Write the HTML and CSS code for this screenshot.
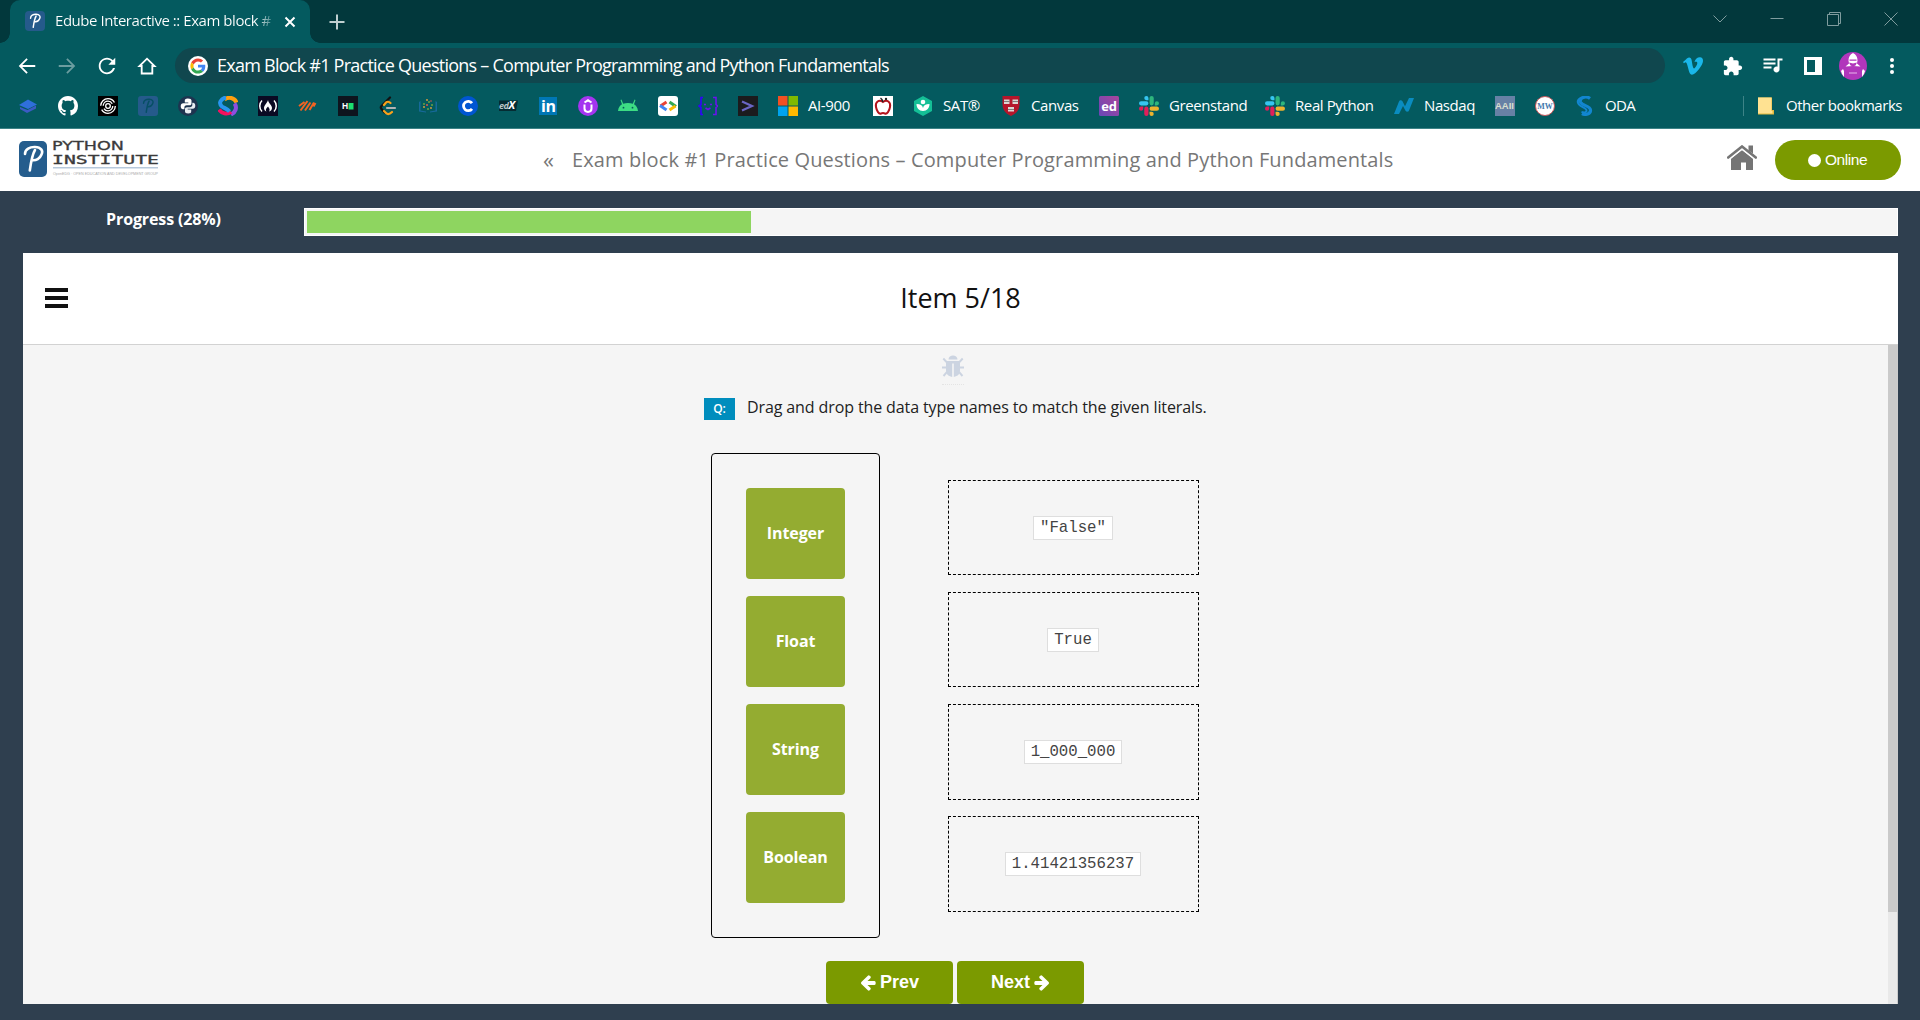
FILE: index.html
```html
<!DOCTYPE html>
<html lang="en">
<head>
<meta charset="utf-8">
<title>Edube Interactive :: Exam block #1</title>
<link rel="stylesheet" href="styles.css">
</head>
<body>
<svg class="defs" width="0" height="0" aria-hidden="true">
  <symbol id="p-mark" viewBox="0 0 28 36">
    <path d="M6 13C6 8 11 5.800 16 6C22 6.300 24.500 9.500 22.500 13.500C21 17.500 17 19.700 13.500 19.200M16 9C13.500 13 12 21 10.800 29.500" fill="none" stroke="currentColor" stroke-width="2.600" stroke-linecap="round"/>
  </symbol>
  <symbol id="slack-arm" viewBox="0 0 24 24">
    <path fill="currentColor" d="M5.042 15.165a2.528 2.528 0 0 1-2.520 2.523A2.528 2.528 0 0 1 0 15.165a2.527 2.527 0 0 1 2.522-2.520h2.520zM6.313 15.165a2.527 2.527 0 0 1 2.521-2.520 2.527 2.527 0 0 1 2.521 2.520v6.313A2.528 2.528 0 0 1 8.834 24a2.528 2.528 0 0 1-2.521-2.522z"/>
  </symbol>
  <symbol id="slack" viewBox="0 0 24 24">
    <use href="#slack-arm" width="24" height="24" color="#e01e5a"/>
    <use href="#slack-arm" width="24" height="24" color="#36c5f0" transform="rotate(90 12 12)"/>
    <use href="#slack-arm" width="24" height="24" color="#2eb67d" transform="rotate(180 12 12)"/>
    <use href="#slack-arm" width="24" height="24" color="#ecb22e" transform="rotate(270 12 12)"/>
  </symbol>
</svg>

<div class="browser">
  <div class="tabstrip">
    <div class="tab">
      <svg class="favicon" viewBox="0 0 20 20"><rect width="20" height="20" rx="4" fill="#255a8b"/><use href="#p-mark" x="1" y="0" width="18" height="20" color="#fff"/></svg>
      <span class="tab-title">Edube Interactive :: Exam block #</span>
      <svg class="tab-close" viewBox="0 0 12 12"><path d="M1.500 1.500l9 9M10.500 1.500l-9 9" stroke="#fff" stroke-width="2"/></svg>
    </div>
    <svg class="new-tab" viewBox="0 0 16 16"><path d="M8 .5v15M.5 8h15" stroke="#bfcfd0" stroke-width="2"/></svg>
    <div class="window-buttons">
      <svg viewBox="0 0 14 14"><path d="M.5 3.500l6.500 6.500 6.500-6.500"/></svg>
      <svg viewBox="0 0 14 14"><path d="M.5 6.500h13"/></svg>
      <svg viewBox="0 0 14 14"><path d="M.5 2.500h11v11h-11zM2.500 2.500v-2h11v11h-2"/></svg>
      <svg viewBox="0 0 14 14"><path d="M.5 .5l13 13M13.500 .5l-13 13"/></svg>
    </div>
  </div>

  <div class="toolbar">
    <svg class="nav" viewBox="0 0 24 24"><path fill="#fff" d="M21 11H6.800l6-6L11.400 3.600 3 12l8.400 8.400 1.400-1.400-6-6H21z"/></svg>
    <svg class="nav" viewBox="0 0 24 24"><path fill="#6b9da0" d="M3 11h14.200l-6-6 1.400-1.400L21 12l-8.400 8.400-1.400-1.400 6-6H3z"/></svg>
    <svg class="nav" viewBox="0 0 24 24"><path fill="#fff" d="M18.360 5.640C16.700 3.980 14.500 3 12 3c-5 0-9 4-9 9s4 9 9 9c4.200 0 7.700-2.870 8.700-6.750h-2.200C17.500 17 15 19 12 19c-3.900 0-7-3.100-7-7s3.100-7 7-7c1.900 0 3.700.8 4.900 2.100L13.500 10.500H21V3z"/></svg>
    <svg class="nav" viewBox="0 0 24 24"><path fill="none" stroke="#fff" stroke-width="2" d="M6.200 20.200v-8.200H3.800L12 4l8.200 8h-2.400v8.200z"/></svg>
    <div class="omnibox">
      <svg class="google" viewBox="0 0 20 20"><circle cx="10" cy="10" r="10" fill="#fff"/><g transform="translate(2.400 2.400) scale(.317)"><path fill="#ea4335" d="M24 9.500c3.540 0 6.710 1.220 9.210 3.600l6.850-6.850C35.900 2.380 30.470 0 24 0 14.620 0 6.510 5.380 2.560 13.220l7.980 6.190C12.430 13.720 17.740 9.500 24 9.500z"/><path fill="#4285f4" d="M46.980 24.550c0-1.570-.15-3.090-.38-4.550H24v9.020h12.940c-.58 2.960-2.260 5.480-4.780 7.180l7.730 6c4.510-4.180 7.090-10.360 7.090-17.650z"/><path fill="#fbbc05" d="M10.530 28.590c-.48-1.450-.76-2.990-.76-4.590s.27-3.140.76-4.590l-7.980-6.190C.92 16.460 0 20.120 0 24s.92 7.540 2.560 10.780z"/><path fill="#34a853" d="M24 48c6.480 0 11.930-2.130 15.890-5.810l-7.730-6c-2.150 1.450-4.920 2.300-8.160 2.300-6.260 0-11.570-4.220-13.470-9.910l-7.980 6.190C6.510 42.620 14.620 48 24 48z"/></g></svg>
      <span class="url">Exam Block #1 Practice Questions – Computer Programming and Python Fundamentals</span>
    </div>
    <div class="extensions">
      <svg width="20" height="20" viewBox="0 0 24 24"><path fill="#1ab7ea" d="M23.977 6.416c-.105 2.338-1.739 5.543-4.894 9.609-3.268 4.247-6.026 6.370-8.290 6.370-1.409 0-2.578-1.294-3.553-3.881L5.322 11.400C4.603 8.816 3.834 7.522 3.010 7.522c-.179 0-.806.378-1.881 1.132L0 7.197c1.185-1.044 2.351-2.084 3.501-3.128C5.080 2.701 6.266 1.984 7.055 1.910c1.867-.18 3.016 1.100 3.447 3.838.465 2.953.789 4.789.971 5.507.539 2.450 1.131 3.674 1.776 3.674.502 0 1.256-.796 2.265-2.385 1.004-1.589 1.540-2.797 1.612-3.628.144-1.371-.395-2.061-1.614-2.061-.574 0-1.167.121-1.777.391 1.186-3.868 3.434-5.757 6.762-5.637 2.473.06 3.628 1.664 3.493 4.797z"/></svg>
      <svg width="20" height="20" viewBox="1 0 23 23"><path fill="#fff" d="M20.500 11H19V7c0-1.100-.9-2-2-2h-4V3.500C13 2.120 11.880 1 10.500 1S8 2.120 8 3.500V5H4c-1.100 0-1.990.9-1.990 2v3.800H3.500c1.490 0 2.700 1.210 2.700 2.700s-1.210 2.700-2.700 2.700H2V20c0 1.100.9 2 2 2h3.800v-1.500c0-1.490 1.210-2.700 2.700-2.700 1.490 0 2.700 1.210 2.700 2.700V22H17c1.100 0 2-.9 2-2v-4h1.500c1.380 0 2.500-1.120 2.500-2.500S21.880 11 20.500 11z"/></svg>
      <svg width="20" height="20" viewBox="2.500 3 20 20"><path fill="#fff" d="M15 6H3v2h12V6zm0 4H3v2h12v-2zM3 16h8v-2H3v2zM17 6v8.180c-.31-.11-.65-.18-1-.18-1.660 0-3 1.340-3 3s1.340 3 3 3 3-1.340 3-3V8h3V6h-5z" transform="translate(0 -.5)"/></svg>
      <svg width="20" height="20" viewBox="0 0 20 20"><path fill="#fff" fill-rule="evenodd" d="M1 1h18v18H1zm3 3v12h8V4z"/></svg>
      <svg class="avatar" width="28" height="28" viewBox="0 0 28 28"><circle cx="14" cy="14" r="14" fill="#b136bb"/><path fill="#fff" d="M14 1c3 1.500 4.500 4 4.500 7.500l-.5 3 3.500 3c-4.500-.8-10.500-.8-15 0l3.500-3-.5-3C9.500 5 11 2.500 14 1z"/><path fill="#b136bb" d="M10.500 7.500h7v1.200h-7zM10 10.500l4 1 4-1-1.500 3-2.500 1-2.500-1z"/><path fill="#fff" d="M2 19l2-2 1 2v6a13 13 0 0 1-3-6zM26 19l-2-2-1 2v6a13 13 0 0 0 3-6z"/><path stroke="#e7b5eb" d="M10 21h8"/></svg>
      <svg width="20" height="20" viewBox="0 0 20 20" fill="#fff"><circle cx="10" cy="4" r="2"/><circle cx="10" cy="10" r="2"/><circle cx="10" cy="16" r="2"/></svg>
    </div>
  </div>

  <div class="bookmarks">
    <svg viewBox="0 0 20 20"><path fill="#2f6fdb" d="M1 9l9-5.500 9 5L10 13z"/><path fill="#3b5bc4" d="M2 11v2l7 4 9-4.500v-3L9.500 14z"/></svg>
    <svg viewBox="0 0 16 16"><path fill="#fff" d="M8 0C3.580 0 0 3.580 0 8c0 3.540 2.290 6.530 5.470 7.590.4.070.55-.17.55-.38 0-.19-.01-.82-.01-1.490-2.010.37-2.530-.49-2.690-.94-.09-.23-.48-.94-.82-1.130-.28-.15-.68-.52-.01-.53.63-.01 1.080.58 1.230.82.720 1.210 1.870.87 2.330.66.070-.52.280-.87.510-1.070-1.780-.2-3.640-.89-3.640-3.950 0-.87.310-1.590.82-2.150-.08-.2-.36-1.020.08-2.120 0 0 .67-.21 2.200.82.640-.18 1.320-.27 2-.27s1.360.09 2 .27c1.530-1.040 2.200-.82 2.200-.82.440 1.100.16 1.920.08 2.120.510.560.82 1.270.82 2.150 0 3.070-1.870 3.750-3.650 3.950.290.250.540.730.540 1.480 0 1.070-.01 1.930-.01 2.200 0 .21.150.46.550.38A8.010 8.010 0 0 0 16 8c0-4.420-3.580-8-8-8z"/></svg>
    <svg viewBox="0 0 20 20"><path fill="#000" d="M0 0h20v20H0z"/><g fill="none" stroke="#fff" stroke-width="1.300"><circle cx="10" cy="10" r="2.300"/><circle cx="10" cy="10" r="4.800" stroke-dasharray="12 3"/><circle cx="10" cy="10" r="7.300" stroke-dasharray="19 4"/></g></svg>
    <svg viewBox="0 0 20 20"><rect width="20" height="20" rx="3" fill="#255a8b"/><use href="#p-mark" x="1" y="0" width="18" height="20" color="#064f64"/></svg>
    <svg viewBox="0 0 20 20"><circle cx="10" cy="10" r="10" fill="#1e3450"/><path fill="#fff" d="M9.800 2.500c-2.500 0-3 1-3 2v2h3.500v.8H5.200c-1.500 0-2.500 1-2.500 3s1 3 2.200 3h1.500v-1.800c0-1.300 1-2.200 2.300-2.200h3c1 0 1.800-.8 1.800-1.800v-3c0-1.300-1.200-2-3.700-2z"/><path fill="#e8edf2" d="M10.200 17.500c2.500 0 3-1 3-2v-2H9.700v-.8h5.100c1.500 0 2.500-1 2.500-3s-1-3-2.200-3h-.8v2.300c0 1.300-1 2.200-2.300 2.200H9c-1.200 0-2 .8-2 1.800v2.500c0 1.300 1 2 3.200 2z"/></svg>
    <svg viewBox="0 0 20 20"><g fill="none" stroke-width="4"><path stroke="#ff9f10" d="M6.500 3.500c4-3 10-2 12 3"/><path stroke="#8d4ee0" d="M13 18.500c4.500-2 6.500-7 3.500-11"/><path stroke="#f5115f" d="M1 13.500c2.500 4 8 5.500 12 2.500"/><path stroke="#2896ef" d="M8 1.500C3 2.500 0 7 4 10.500c2 1.500 5 2 7.500 5"/></g></svg>
    <svg viewBox="0 0 20 20"><path fill="#0a0a23" d="M0 0h20v20H0z"/><g fill="none" stroke="#fff" stroke-width="1.500"><path d="M4 4.500c-3 3-3 8 0 11M16 4.500c3 3 3 8 0 11"/></g><path fill="#fff" d="M10 4c-.5 3-4 5-4 8 0 2 1 3 2.500 3.500C7 13 9 12 10 10.500c1 1.500 2.500 3 1 5 2-.5 3-2 3-3.500 0-3-3.500-4.500-4-8z"/></svg>
    <svg viewBox="0 0 20 20"><g stroke="#f26322" stroke-width="2"><path d="M1 10l5.500-4M2.500 14.500l7-9.500M7 14.500l5.500-8M11.500 14l4.500-7.500M15.500 10.500l2-3.500"/></g></svg>
    <svg viewBox="0 0 20 20"><path fill="#0e141e" d="M0 0h20v20H0z"/><text x="4" y="13.300" class="hi">H</text><path fill="#1cdf70" d="M10.500 7h5v6.500h-5z"/></svg>
    <svg viewBox="0 0 20 20"><g fill="none" stroke-linecap="round" stroke-linejoin="round" stroke-width="2.200"><path stroke="#121212" d="M12 1.500L3.500 10c-1 1-1 2 0 3l3 3.500"/><path stroke="#f8a11b" d="M6 9l2-2.500c1-1 3-1 4.500.5M6 15l2 2c2 2 4 1 6-1"/><path stroke="#b3b3b3" d="M9 12h8"/></g></svg>
    <svg viewBox="0 0 20 20"><path fill="#17699a" d="M1 6l1.500-1v9.500l5.500 1v1l-7-1zM19 6l-1.500-1v9.500l-5.500 1v1l7-1z"/><g fill="#67a33f"><circle cx="6" cy="8" r="1"/><circle cx="11" cy="6" r="1"/><circle cx="14" cy="9" r="1"/><circle cx="10" cy="13" r="1"/></g><g fill="#e4a23d"><circle cx="9" cy="4" r=".9"/><circle cx="6" cy="11" r=".9"/><circle cx="13" cy="12" r=".9"/></g><g fill="#dd5752"><circle cx="9" cy="9" r="1"/><circle cx="13" cy="5" r=".8"/></g></svg>
    <svg viewBox="0 0 20 20"><circle cx="10" cy="10" r="10" fill="#0056d2"/><path d="M14 7.200a4.700 4.700 0 1 0 0 5.600" fill="none" stroke="#fff" stroke-width="2.800"/></svg>
    <svg viewBox="0 0 20 20"><path fill="#052c33" d="M1 4.500h19l-2 10.500H1z"/><text x="1" y="13" class="edx">ed<tspan class="edx-x">X</tspan></text></svg>
    <svg viewBox="0 0 20 20"><path fill="#0077b5" d="M1 1h18v18H1z"/><text x="3" y="15.500" class="li">in</text></svg>
    <svg viewBox="0 0 20 20"><circle cx="10" cy="10" r="10" fill="#a435f0"/><path d="M6.500 8.500v4c0 4.500 7 4.500 7 0v-4M6.500 6.500L10 4.300l3.500 2.200" fill="none" stroke="#fff" stroke-width="2"/></svg>
    <svg viewBox="0 0 20 20"><path fill="#3ddc84" d="M0 15c.4-3.500 2-5.500 4-6.700L2.500 4l.9-.5L5.200 7.800c3-1.200 6.600-1.200 9.600 0L16.600 3.500l.9.500L16 8.300c2 1.200 3.600 3.200 4 6.700z"/><circle cx="5.500" cy="11.700" r=".9" fill="#045a5f"/><circle cx="14.500" cy="11.700" r=".9" fill="#045a5f"/></svg>
    <svg viewBox="0 0 20 20"><rect width="20" height="20" rx="3" fill="#fff"/><g fill="none" stroke-width="3"><path stroke="#ea4335" d="M8.500 6L2.500 10"/><path stroke="#4285f4" d="M2 9.500l6.500 4.500"/><path stroke="#34a853" d="M11.500 6l6.500 4.500"/><path stroke="#fbbc04" d="M17.500 10l-6 4"/></g></svg>
    <svg viewBox="0 0 20 20"><g fill="none" stroke="#3300ff" stroke-width="1.600"><path d="M5 1.500H3v7L1 10l2 1.500v7h2"/><path stroke="#6a12ee" d="M15 1.500h3v7l1.500 1.500-1.500 1.500v7h-3M6 8.500h2M12 8.500h2M7.500 12l2.500 1.500 2.500-1.500"/></g></svg>
    <svg viewBox="0 0 20 20"><path fill="#1b1b1d" d="M0 0h20v20H0z"/><path d="M4 5.500l10 4.500-10 4.500" fill="none" stroke="#6a66c4" stroke-width="2.200"/></svg>
    <svg viewBox="0 0 20 20"><path fill="#f25022" d="M0 0h9.500v9.500H0z"/><path fill="#7fba00" d="M10.500 0H20v9.500h-9.500z"/><path fill="#00a4ef" d="M0 10.500h9.500V20H0z"/><path fill="#ffb900" d="M10.500 10.500H20V20h-9.500z"/></svg>
    <span class="label ai">AI-900</span>
    <svg viewBox="0 0 20 20"><path fill="#fff" d="M0 0h20v20H0z"/><path d="M10 6C6 3 2 6 3 11c.7 4 3 7.500 5 6.500 1.500-.7 2.500-.7 4 0 2 1 4.300-2.500 5-6.500 1-5-3-8-7-5z" fill="#fff" stroke="#b3131c" stroke-width="2"/><path d="M10 6c-.5-2-1-3-2.500-4" fill="none" stroke="#222" stroke-width="1.500"/><circle cx="13" cy="3" r="1.200" fill="#222"/></svg>
    <svg viewBox="0 0 20 20"><path fill="#14bf96" d="M10 0l9 5v10l-9 5-9-5V5z"/><circle cx="10" cy="6" r="2.300" fill="#fff"/><path fill="#fff" d="M3.500 8c4 0 6 1.500 6.500 4 .5-2.500 2.500-4 6.500-4 0 4-2.500 7-6.500 7s-6.500-3-6.500-7z"/></svg>
    <span class="label sat">SAT®</span>
    <svg viewBox="0 0 20 20"><path fill="#b5152b" d="M1.500 0h17v8c0 6-3 9.500-8.500 12C4.500 17.500 1.500 14 1.500 8z"/><g fill="#ddd6d3"><path d="M3 3.500h5.500v4.500H3zM11.500 3.500H17v4.500h-5.500zM7 11h6v4.500H7z"/></g><path stroke="#666" d="M3 5.500h5.500M11.500 5.500H17M7 13.500h6" stroke-width=".8"/></svg>
    <span class="label canvas">Canvas</span>
    <svg viewBox="0 0 20 20"><defs><linearGradient id="edg" x1="1" x2="0" y2="1"><stop stop-color="#a8459c"/><stop offset="1" stop-color="#6747b7"/></linearGradient></defs><rect width="20" height="20" rx="1.500" fill="url(#edg)"/><text x="2.300" y="14.800" class="ed">ed</text></svg>
    <svg viewBox="0 0 24 24"><use href="#slack" width="24" height="24"/></svg>
    <span class="label green">Greenstand</span>
    <svg viewBox="0 0 24 24"><use href="#slack" width="24" height="24"/></svg>
    <span class="label real">Real Python</span>
    <svg viewBox="0 0 20 20"><path fill="#0a8cc0" d="M0 18L5 5.500c.6-1.500 2.500-1.500 3.500-.3l2.500 5L15 2h5l-5 12.500c-.6 1.500-2.500 1.500-3.500.3L9 10l-4 8z"/></svg>
    <span class="label nasdaq">Nasdaq</span>
    <svg viewBox="0 0 20 20"><path fill="#6781a5" d="M0 0h20v20H0z"/><text x="0" y="12.500" class="aaii" textLength="19" lengthAdjust="spacingAndGlyphs">AAII</text></svg>
    <svg viewBox="0 0 20 20"><circle cx="10" cy="10" r="9.500" fill="#fff" stroke="#c9565a"/><text x="2.300" y="13" class="mw" textLength="15.500" lengthAdjust="spacingAndGlyphs">MW</text></svg>
    <svg viewBox="0 0 20 20"><g fill="none" stroke="#1286d0"><path d="M15 2.500C11-.5 4 1.500 5.500 6c1.500 4 9.500 3.500 10 8 .3 4-5 5.500-8.500 3.500" stroke-width="3.200"/><path d="M9 1.500C4 1.500 1 5 4 8.500c2 2.500 6.500 3 7.500 5.500.5 2-1.500 3-5 2" stroke-width="2"/></g></svg>
    <span class="label oda">ODA</span>
    <span class="divider"></span>
    <svg class="folder" viewBox="0 0 16 20"><path fill="#e2b93c" d="M0 1.500h14V14h2v4.500H0z"/><path fill="#ffe292" d="M0 1.500h13.500V15h1v2.500H0z"/></svg>
    <span class="label other">Other bookmarks</span>
  </div>
</div>

<header class="site-header">
  <svg class="logo" width="144" height="46" viewBox="0 -4 144 46">
    <rect y="1" width="28" height="36" rx="5" fill="#255d8d"/><use href="#p-mark" y="1" width="28" height="36" color="#fff"/>
    <text x="33" y="10" class="logo-a" textLength="72" lengthAdjust="spacingAndGlyphs">PYTHON</text>
    <text x="33" y="24" class="logo-b" textLength="107" lengthAdjust="spacingAndGlyphs">INSTITUTE</text>
    <path fill="#b7c9dc" d="M34 27h105v1.600H34z"/>
    <text x="34" y="35" class="logo-c" textLength="105" lengthAdjust="spacingAndGlyphs">OpenEDG · OPEN EDUCATION AND DEVELOPMENT GROUP</text>
  </svg>
  <div class="course"><span class="chevron">«</span><span class="course-title">Exam block #1 Practice Questions – Computer Programming and Python Fundamentals</span></div>
  <svg class="home" viewBox="0 0 30 25"><path fill="#757575" d="M4 13.500L15 5l11 8.500V25h-7v-7.500h-5V25H4z"/><path d="M1 13L15 1.800 29 13" fill="none" stroke="#fff" stroke-width="5"/><path d="M1.200 12.500L15 1.500l13.800 11" fill="none" stroke="#757575" stroke-width="2.600" stroke-linecap="round"/><path fill="#757575" d="M21.500 .5h4.500v8l-4.500-3z"/></svg>
  <div class="online"><span class="dot"></span>Online</div>
</header>

<main class="exam">
  <div class="progress">
    <div class="progress-label">Progress (28%)</div>
    <div class="bar"><div class="fill"></div></div>
  </div>
  <section class="panel">
    <div class="panel-head">
      <div class="burger"><i></i><i></i><i></i></div>
      <h1>Item 5/18</h1>
    </div>
    <div class="panel-body">
      <div class="content">
        <div class="bug"><svg width="22" height="22" viewBox="0 0 22 22"><path fill="#ccd4e1" d="M6.500 4.500C6.500-1 15.500-1 15.500 4.500zM4 6h14v9c0 4-2 6-6.200 7V8.500h-1.600V22C6 21 4 19 4 15z"/><path d="M1.300 3.500L4.500 7M20.700 3.500L17.500 7M0 12.500h5M22 12.500h-5M1.500 21L5 17M20.500 21L17 17" stroke="#ccd4e1" stroke-width="1.900"/></svg></div>
        <div class="question"><span class="q">Q:</span><span class="q-text">Drag and drop the data type names to match the given literals.</span></div>
        <div class="match">
          <div class="sources">
            <div class="tile">Integer</div>
            <div class="tile">Float</div>
            <div class="tile">String</div>
            <div class="tile">Boolean</div>
          </div>
          <div class="targets">
            <div class="target"><code>"False"</code></div>
            <div class="target"><code>True</code></div>
            <div class="target tall"><code>1_000_000</code></div>
            <div class="target tall"><code>1.41421356237</code></div>
          </div>
        </div>
        <div class="pager">
          <div class="btn"><svg viewBox="90 166 1610 1590"><path fill="#fff" d="M1664 896v128q0 53-32.500 90.500t-84.500 37.500h-704l293 294q38 36 38 90t-38 90l-75 76q-37 37-90 37-52 0-91-37l-651-652q-37-37-37-90 0-52 37-91l651-650q38-38 91-38 52 0 90 38l75 74q38 38 38 91t-38 91l-293 293h704q52 0 84.500 37.500t32.500 90.500z"/></svg><span>Prev</span></div>
          <div class="btn"><span>Next</span><svg class="flip" viewBox="90 166 1610 1590"><path fill="#fff" d="M1664 896v128q0 53-32.500 90.500t-84.500 37.500h-704l293 294q38 36 38 90t-38 90l-75 76q-37 37-90 37-52 0-91-37l-651-652q-37-37-37-90 0-52 37-91l651-650q38-38 91-38 52 0 90 38l75 74q38 38 38 91t-38 91l-293 293h704q52 0 84.500 37.500t32.500 90.500z"/></svg></div>
        </div>
      </div>
      <div class="scrollbar"><div class="thumb"></div></div>
    </div>
  </section>
</main>
</body>
</html>
```
FILE: styles.css
```css
* { box-sizing: border-box; }
body { margin: 0; width: 1920px; height: 1020px; overflow: hidden; background: #2f3f4f; font-family: "Open Sans", "Noto Sans", sans-serif; display: flex; flex-direction: column; }
svg { display: block; flex: none; }
.defs { position: absolute; }

/* browser chrome */
.browser { height: 129px; flex: none; background: #045a5f; border-bottom: 1px solid #3d8387; color: #fff; }
.tabstrip { height: 43px; background: #02383c; display: flex; align-items: center; padding-left: 10px; }
.tab { position: relative; width: 300px; height: 43px; background: #045a5f; border-radius: 10px 10px 0 0; display: flex; align-items: center; padding-left: 15px; }
.tab::before, .tab::after { content: ""; position: absolute; bottom: 0; width: 10px; height: 10px; }
.tab::before { left: -10px; background: radial-gradient(circle at 0 0, #02383c 9.500px, #045a5f 10px); }
.tab::after { right: -10px; background: radial-gradient(circle at 100% 0, #02383c 9.500px, #045a5f 10px); }
.favicon { width: 20px; height: 20px; margin-top: -1px; }
.tab-title { width: 218px; margin-left: 10px; font-size: 15px; letter-spacing: -0.450px; line-height: 20px; white-space: nowrap; margin-top: -3px; background: linear-gradient(90deg, #fff 200px, #3b7f83 218px); -webkit-background-clip: text; background-clip: text; color: transparent; }
.tab-close { width: 12px; height: 12px; margin-left: 11px; }
.new-tab { width: 16px; height: 16px; margin-left: 19px; }
.window-buttons { margin-left: auto; display: flex; gap: 43px; padding-right: 22px; margin-top: -6px; }
.window-buttons svg { width: 14px; height: 14px; fill: none; stroke: #7f9c9e; }

.toolbar { height: 45px; display: flex; align-items: center; padding-left: 16px; }
.nav { width: 22px; height: 22px; margin-right: 18px; }
.omnibox { width: 1490px; height: 35px; margin-left: -1px; border-radius: 18px; background: #10474e; display: flex; align-items: center; padding-left: 13px; }
.google { width: 20px; height: 20px; }
.url { margin-left: 9px; font-size: 18px; letter-spacing: -0.750px; line-height: 24px; margin-top: -1px; white-space: nowrap; }
.extensions { display: flex; align-items: center; gap: 20px; margin-left: 18px; }
.avatar { margin: 0 -5px 0 -4px; }

.bookmarks { height: 40px; display: flex; align-items: center; gap: 20px; padding: 0 0 4px 18px; }
.bookmarks svg { width: 20px; height: 20px; }
.label { margin-left: -10px; margin-top: -2px; flex: none; font-size: 15px; letter-spacing: -0.400px; line-height: 20px; white-space: nowrap; }
.ai { width: 45px; }
.sat { width: 38px; }
.canvas { width: 48px; }
.green { width: 76px; }
.real { width: 79px; }
.nasdaq { width: 51px; }
.oda { width: 33px; letter-spacing: -0.700px; }
.divider { flex: none; width: 1px; height: 20px; background: #3d8387; margin-left: 85px; }
.bookmarks .folder { width: 16px; margin-left: -6px; }
.other { width: 120px; margin-left: -8px; letter-spacing: -0.480px; }
.hi { font: bold 8.500px "Liberation Sans", sans-serif; fill: #fff; }
.edx { font: italic bold 9px "Open Sans", sans-serif; fill: #b9c5c7; letter-spacing: -0.500px; }
.edx-x { fill: #fff; font-size: 11px; }
.li { font: bold 16px "Open Sans", sans-serif; fill: #fff; letter-spacing: -0.500px; }
.ed { font: bold 13px "Open Sans", sans-serif; fill: #fff; letter-spacing: -0.300px; }
.aaii { font: bold 9px "Liberation Sans", sans-serif; fill: #d9dfcf; }
.mw { font: bold 8.500px "Liberation Serif", serif; fill: #4379ae; }

/* site header */
.site-header { height: 62px; flex: none; background: #fff; display: flex; align-items: center; padding: 0 19px; }
.logo { margin-top: -2px; }
.logo-a { font: 12.300px "DejaVu Sans", sans-serif; fill: #3b3b3b; stroke: #3b3b3b; stroke-width: .3px; }
.logo-b { font: 12.300px "DejaVu Sans Mono", monospace; fill: #3b3b3b; stroke: #3b3b3b; stroke-width: .3px; }
.logo-c { font: 4.300px "Liberation Sans", sans-serif; fill: #aaa; }
.course { display: flex; align-items: center; margin-left: 380px; width: 1184px; color: #777; font-size: 20px; line-height: 28px; white-space: nowrap; }
.course-title { letter-spacing: 0.125px; }
.chevron { width: 29px; font-size: 22px; margin-top: -3px; }
.home { width: 30px; height: 25px; margin-top: -6px; }
.online { width: 126px; height: 40px; margin-left: 18px; border-radius: 20px; background: #7b9a00; color: #fff; display: flex; align-items: center; padding-left: 33px; font: 15.500px "Liberation Sans", sans-serif; letter-spacing: -0.450px; }
.dot { width: 13px; height: 13px; border-radius: 50%; background: #fff; margin-right: 4px; }

/* exam */
.exam { flex: 1; padding: 17px 22px 16px 23px; display: flex; flex-direction: column; }
.progress { display: flex; height: 28px; flex: none; margin-bottom: 17px; }
.progress-label { width: 281px; text-align: center; color: #fff; font-weight: 700; font-size: 16px; line-height: 23px; letter-spacing: -0.130px; }
.bar { flex: 1; background: #f5f5f5; border: 1px solid #fff; padding: 2px; }
.fill { width: 27.950%; height: 22px; background: #8ed560; }
.panel { flex: 1; min-height: 0; display: flex; flex-direction: column; background: #f4f4f4; }
.panel-head { height: 92px; flex: none; background: #fff; border-bottom: 1px solid #d2d2d2; display: grid; grid-template-columns: 90px 1fr 90px; align-items: center; }
.burger { display: grid; gap: 4px; padding: 0 0 1px 22px; }
.burger i { display: block; width: 23px; height: 4px; background: #111; }
.panel-head h1 { margin: -2px 0 0; font-weight: 400; font-size: 27px; line-height: 36px; text-align: center; color: #111; }
.panel-body { flex: 1; display: flex; min-height: 0; }
.content { flex: 1; display: flex; flex-direction: column; align-items: center; padding-top: 10px; background: #f5f5f5; }
.bug { height: 30px; border-bottom: 1px dotted #e4e4e4; margin-right: 6px; }
.question { display: flex; margin-top: 13px; height: 22px; width: 503px; }
.q { flex: none; width: 31px; height: 22px; background: #008dbd; color: #fff; font-size: 12px; font-weight: 600; line-height: 22px; text-align: center; }
.q-text { margin-left: 12px; color: #222; font-size: 16px; letter-spacing: -0.110px; line-height: 18px; white-space: nowrap; }
.match { display: flex; width: 488px; margin-top: 33px; margin-right: 1px; gap: 68px; align-items: flex-start; }
.sources { width: 169px; height: 485px; border: 1px solid #000; border-radius: 4px; padding: 34px; display: grid; grid-auto-rows: 91px; gap: 17px; }
.tile { background: #94ac31; border-radius: 4px; color: #fff; font-size: 16px; font-weight: 700; display: flex; align-items: center; justify-content: center; padding-bottom: 2px; letter-spacing: -0.100px; }
.targets { width: 251px; height: 485px; padding-top: 27px; display: grid; grid-auto-rows: 112px; align-content: start; align-items: start; }
.target { height: 95px; border: 1px dashed #000; display: flex; align-items: center; justify-content: center; padding-right: 1px; }
.tall { height: 96px; }
.target code { background: #fff; border: 1px solid #dedede; height: 24px; padding: 0 6px; font: 15.700px/22px "Liberation Mono", monospace; color: #444; }
.pager { display: flex; gap: 4px; margin-top: 23px; margin-right: 1px; }
.btn { width: 127px; height: 43px; background: #7b9a00; border-radius: 4px; color: #fff; font: bold 18px "Liberation Sans", sans-serif; display: flex; align-items: center; justify-content: center; gap: 4px; }
.btn svg { width: 16px; height: 16px; }
.flip { transform: scaleX(-1); }
.scrollbar { width: 10px; background: #e9e9e9; border-right: 1px solid #ccc; }
.thumb { height: 567px; background: #cacaca; }
```
